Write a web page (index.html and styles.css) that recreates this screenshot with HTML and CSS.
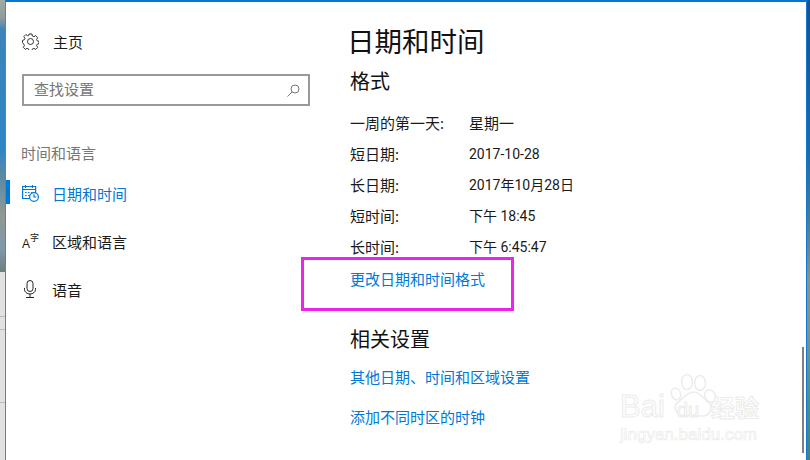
FILE: index.html
```html
<!DOCTYPE html>
<html>
<head>
  <title>日期和时间</title>
  <link rel="stylesheet" href="styles.css">
</head>
<body>
  <div class="screen">
    <div class="wall-left">
      <div class="wall-photo"></div>
      <div class="wall-rows">
        <div class="wall-row row-a"></div>
        <div class="wall-row row-b"></div>
        <div class="wall-row row-c"></div>
      </div>
    </div>

    <div class="window">
      <div class="sidebar">
        <div class="home-row">
          <svg class="nav-icon" width="17" height="17" viewBox="0 0 17 17" fill="none" stroke="#333" stroke-width="1">
            <path d="M7 1h3l.4 2 1.500.7 1.800-1.100 2 2-1.100 1.800.7 1.500 1.700.4v2.400l-1.700.4-.7 1.500 1.100 1.800-2 2-1.800-1.100-1.500.7-.4 1.700H7l-.4-1.700-1.500-.7-1.800 1.100-2-2 1.100-1.800-.7-1.500L.5 9.700V7.300l1.700-.4.7-1.500-1.100-1.800 2-2 1.800 1.100 1.500-.7z"/>
            <circle cx="8.500" cy="8.500" r="3"/>
          </svg>
          <span class="home-label">主页</span>
        </div>

        <div class="search-box">
          <span class="search-text">查找设置</span>
          <svg class="search-icon" width="13" height="13" viewBox="0 0 13 13" fill="none" stroke="#777" stroke-width="1">
            <circle cx="8" cy="5" r="4"/>
            <path d="M5 8l-4.500 4.500"/>
          </svg>
        </div>

        <div class="group-title">时间和语言</div>

        <div class="nav-list">
          <div class="nav-item active">
            <svg class="nav-icon" width="17" height="17" viewBox="0 0 17 17" fill="none" stroke="#0078d7" stroke-width="1.200">
              <path d="M8 13.500H.6v-12h13V8"/>
              <path d="M.6 4.500h13M3.500 0v3M10.500 0v3"/>
              <path d="M3 7.500h1.600M6 7.500h1.600M9 7.500h1.600M3 10.500h1.600M6 10.500h1.600"/>
              <circle cx="12" cy="12" r="4.400" fill="#fff"/>
              <path d="M12 9.300V12h2.400"/>
            </svg>
            <span>日期和时间</span>
          </div>
          <div class="nav-item">
            <span class="lang-icon"><span class="lang-a">A</span><span class="lang-zi">字</span></span>
            <span>区域和语言</span>
          </div>
          <div class="nav-item">
            <svg class="nav-icon" width="16" height="18" viewBox="0 0 16 18" fill="none" stroke="#222" stroke-width="1">
              <rect x="5" y="0.500" width="6" height="11" rx="3"/>
              <path d="M2.500 8v1.500a5.500 4.500 0 0 0 11 0V8"/>
              <path d="M8 14v3.500M4 17.500h8"/>
            </svg>
            <span>语音</span>
          </div>
        </div>
      </div>

      <div class="content">
        <h1 class="page-title">日期和时间</h1>
        <h2 class="section-title">格式</h2>
        <div class="format-list">
          <div class="format-row"><span class="format-key">一周的第一天:</span><span>星期一</span></div>
          <div class="format-row"><span class="format-key">短日期:</span><span class="format-num">2017-10-28</span></div>
          <div class="format-row"><span class="format-key">长日期:</span><span class="format-num">2017年10月28日</span></div>
          <div class="format-row"><span class="format-key">短时间:</span><span class="format-num">下午 18:45</span></div>
          <div class="format-row"><span class="format-key">长时间:</span><span class="format-num">下午 6:45:47</span></div>
        </div>
        <div class="format-link">
          <a class="link" href="#">更改日期和时间格式</a>
          <div class="highlight-box"></div>
        </div>
        <h2 class="section-title related-title">相关设置</h2>
        <a class="link related-link" href="#">其他日期、时间和区域设置</a>
        <a class="link related-link" href="#">添加不同时区的时钟</a>

        <div class="scroll-thumb"></div>
        <div class="watermark">
          <svg class="paw" width="46" height="46" viewBox="0 0 46 46" fill="#fff" stroke="#ececec" stroke-width="1.500">
            <ellipse cx="6" cy="21" rx="4.500" ry="6" transform="rotate(-20 6 21)"/>
            <ellipse cx="17" cy="9" rx="5.500" ry="7.500"/>
            <ellipse cx="30" cy="10" rx="5.500" ry="7.500"/>
            <ellipse cx="40" cy="23" rx="5" ry="6.500" transform="rotate(-25 40 23)"/>
            <path d="M24 19c6 0 10 7 15 11 4 4 1 14-7 13-4 0-6-1-9-1s-6 2-10 1c-7-1-10-9-6-13 6-4 9-11 17-11z"/>
          </svg>
          <div class="mark-top"><span class="mark-baidu">Bai</span><span class="mark-du">du</span><span class="mark-jy">经验</span></div>
          <div class="mark-url">jingyan.baidu.com</div>
        </div>
      </div>
    </div>

    <div class="wall-right"></div>
  </div>
</body>
</html>
```

FILE: styles.css
```css
body {
  margin: 0;
  font-family: "Noto Sans", "Noto Sans CJK SC", sans-serif;
  color: #1a1a1a;
}

.screen {
  display: flex;
  width: 810px;
  height: 460px;
  overflow: hidden;
}

/* desktop wallpaper strips either side of the window */
.wall-left {
  width: 5px;
  display: flex;
  flex-direction: column;
}

.wall-photo {
  height: 272px;
  background: linear-gradient(#a3aaa4 0, #8d9c9c 18px, #3c83bb 30px, #2f86c5 150px, #5d8aa0 178px, #8f9a94 215px, #7f98a6 250px, #6d7f80 272px);
}

.wall-rows {
  flex: 1;
  background: #e2e2e2;
}

.wall-row {
  border-bottom: 1px solid #bbb;
  box-sizing: border-box;
}

.row-a { height: 45px; }
.row-b { height: 13px; }
.row-c { height: 73px; }

.wall-right {
  width: 3px;
  background: linear-gradient(#1a4f8f 0, #1d6aa8 150px, #4c7a92 220px, #8b938a 280px, #7f9390 330px, #4f8d8d 400px, #4a7f7c 460px);
}

.window {
  flex: 1;
  display: flex;
  background: #fff;
  border-top: 2px solid #0078d7;
  border-left: 1px solid #3b8bd0;
  border-right: 1px solid #0f7ad6;
}

.sidebar {
  width: 342px;
  flex-shrink: 0;
}

.home-row {
  display: flex;
  align-items: center;
  padding: 29px 0 0 16px;
  height: 20px;
  font-size: 15px;
}

.home-label {
  margin-left: 14px;
}

.search-box {
  display: flex;
  align-items: center;
  justify-content: space-between;
  box-sizing: border-box;
  width: 288px;
  height: 32px;
  margin: 23px 0 0 16px;
  padding: 0 8px 0 10px;
  border: 2px solid #999;
  color: #767676;
  font-size: 15px;
}

.search-text {
  margin-top: -4px;
}

.group-title {
  margin: 36px 0 0 15px;
  font-size: 15px;
  line-height: 22px;
  color: #767676;
}

.nav-list {
  margin-top: 5px;
}

.nav-item {
  display: flex;
  align-items: center;
  height: 48px;
  padding-left: 16px;
  font-size: 15px;
  position: relative;
}

.nav-item .nav-icon,
.lang-icon {
  flex-shrink: 0;
  margin-right: 14px;
}

.nav-item.active {
  color: #0078d7;
}

.nav-item.active::before {
  content: "";
  position: absolute;
  left: 0;
  top: 11px;
  width: 4px;
  height: 24px;
  background: #0078d7;
}

.nav-item.active .nav-icon {
  margin-right: 13px;
}

.lang-icon {
  display: block;
  position: relative;
  width: 16px;
  height: 17px;
}

.lang-a {
  position: absolute;
  left: 0;
  bottom: 0;
  font-size: 12px;
  line-height: 11px;
  font-family: "Liberation Sans", sans-serif;
}

.lang-zi {
  position: absolute;
  left: 8px;
  top: 0;
  font-size: 9px;
  line-height: 9px;
}

.content {
  flex: 1;
  position: relative;
}

.page-title {
  margin: 20px 0 0 -1px;
  font-size: 27.500px;
  line-height: 40px;
  font-weight: 400;
  color: #111;
}

.section-title {
  margin: 2px 0 0 2px;
  font-size: 20px;
  line-height: 36px;
  font-weight: 400;
  color: #111;
}

.format-list {
  margin: 8px 0 0 2px;
}

.format-row {
  display: flex;
  height: 31px;
  line-height: 31px;
  font-size: 15px;
}

.format-key {
  width: 119px;
}

/* the digits in the reference run narrower than the han text */
.format-num {
  font-family: Roboto, "Noto Sans CJK SC", sans-serif;
  font-size: 14px;
}

.format-link {
  position: relative;
  margin: 1px 0 0 2px;
  line-height: 31px;
}

.link {
  color: #0078d7;
  font-size: 15px;
  text-decoration: none;
}

/* annotation drawn over the screenshot */
.highlight-box {
  position: absolute;
  left: -49px;
  top: -7px;
  width: 213px;
  height: 54px;
  box-sizing: border-box;
  border: 3px solid #ee22ee;
}

.related-title {
  margin-top: 27px;
}

.related-link {
  display: block;
  margin: 10px 0 0 2px;
  line-height: 30px;
}

.related-title + .related-link {
  margin-top: 4px;
}

.scroll-thumb {
  position: absolute;
  right: 2px;
  top: 345px;
  width: 2px;
  height: 106px;
  background: #808080;
}

.watermark {
  position: absolute;
  left: 272px;
  top: 371px;
  width: 170px;
  height: 78px;
  color: #fff;
  -webkit-text-stroke: 1px #ececec;
  font-family: "Liberation Sans", "Noto Sans CJK SC", sans-serif;
}

.paw {
  position: absolute;
  left: 50px;
  top: 0;
}

.mark-top {
  position: absolute;
  left: 0;
  top: 17px;
  display: flex;
  align-items: baseline;
  line-height: 34px;
  font-size: 31px;
}

.mark-du {
  margin-left: 12px;
  font-size: 20px;
}

.mark-jy {
  margin-left: 12px;
  font-size: 24px;
  font-weight: 700;
}

.mark-url {
  position: absolute;
  left: 0;
  top: 52px;
  font-size: 17px;
  line-height: 20px;
  -webkit-text-stroke: 0.700px #ececec;
}
```
